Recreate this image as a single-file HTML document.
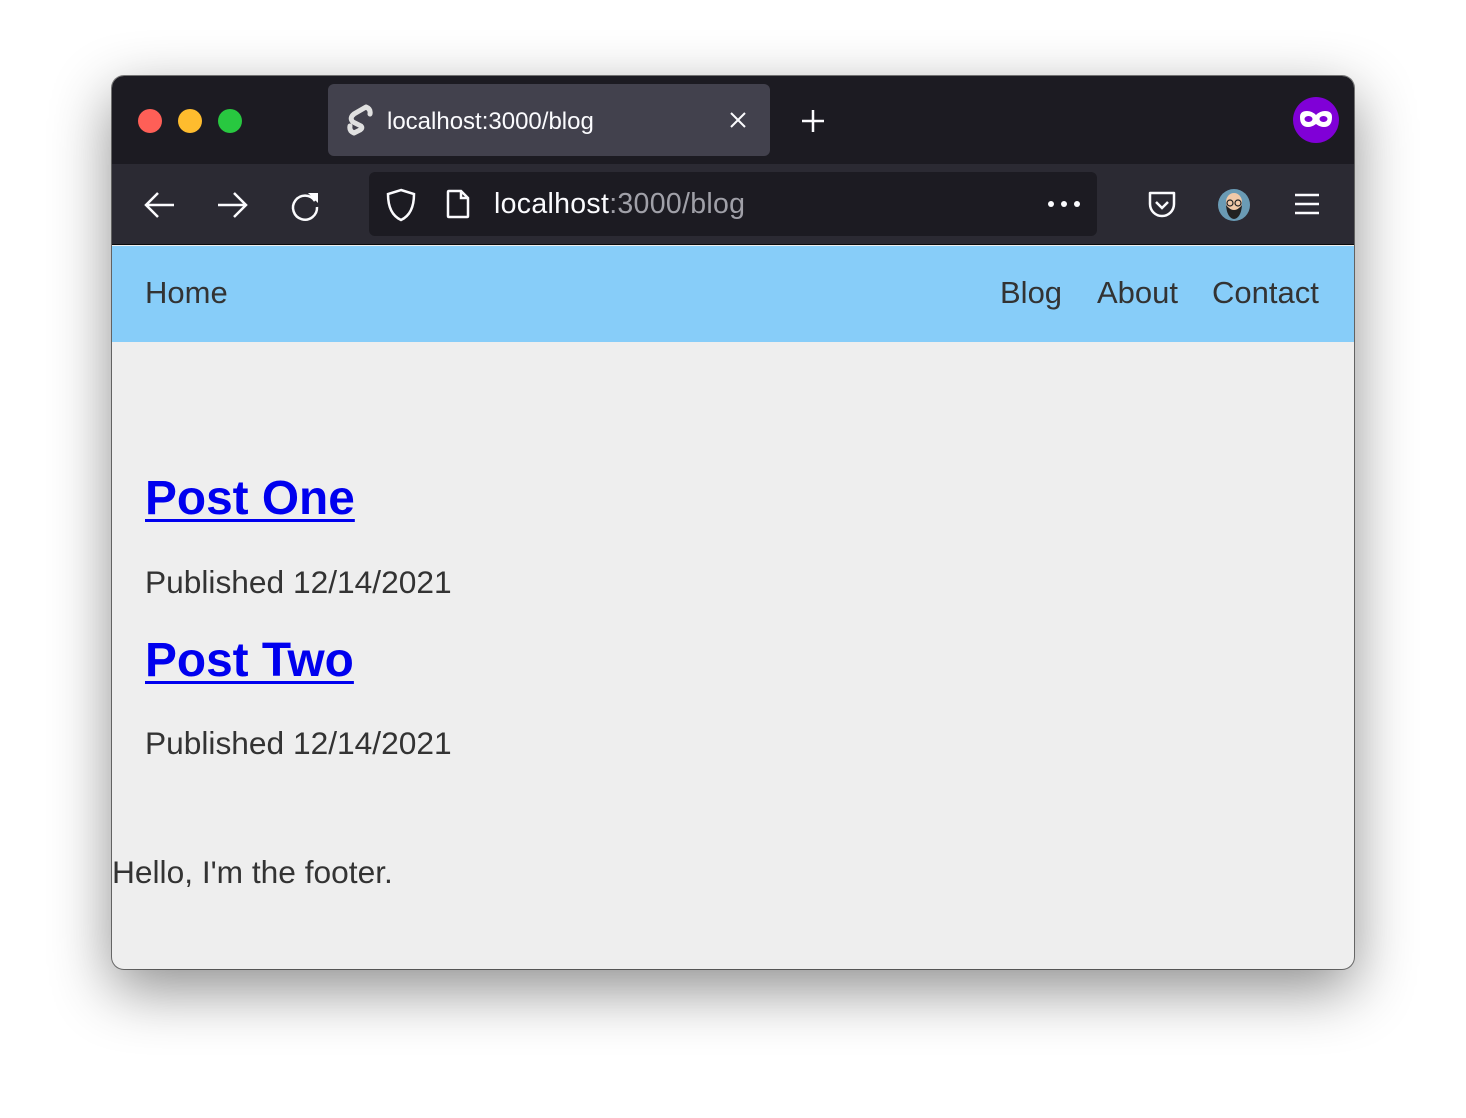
<!DOCTYPE html>
<html><head><meta charset="utf-8"><style>
*{margin:0;padding:0;box-sizing:border-box}
body{width:1466px;height:1118px;background:#fff;font-family:"Liberation Sans",Arial,sans-serif;position:relative;overflow:hidden}
.win{position:absolute;left:112px;top:76px;width:1242px;height:893px;border-radius:12px;overflow:hidden;background:#eeeeee;box-shadow:0 20px 60px rgba(0,0,0,.45),0 0 0 1px rgba(0,0,0,.5)}
.title{position:absolute;left:0;top:0;width:100%;height:88px;background:#1c1b22}
.dot{position:absolute;top:33px;width:24px;height:24px;border-radius:50%}
.tab{position:absolute;left:216px;top:8px;width:442px;height:72px;background:#42414d;border-radius:6px}
.tab span{position:absolute;left:59px;top:24px;color:#fbfbfe;font-size:24px}
.tool{position:absolute;left:0;top:88px;width:100%;height:81px;background:#2b2a33;border-bottom:1px solid #0c0c0d}
.url{position:absolute;left:257px;top:8px;width:728px;height:64px;background:#1c1b22;border-radius:6px}
.url span{position:absolute;left:125px;top:16px;font-size:28.5px;letter-spacing:0.3px;color:#fbfbfe}
.nav{position:absolute;left:0;top:170px;width:100%;height:96px;background:#87cdf9}
.nav a{position:absolute;top:29px;font-size:31px;color:#333;text-decoration:none}
h2{position:absolute;left:33px;font-size:47.8px;font-weight:bold}
h2 a{color:#0000ee;text-decoration:underline;text-decoration-thickness:3px;text-underline-offset:5px}
.p{position:absolute;left:33px;font-size:31.7px;color:#333}
svg{position:absolute}
</style></head><body>
<div class="win">
 <div class="title">
  <div class="dot" style="left:26px;background:#fe5f57"></div>
  <div class="dot" style="left:66px;background:#febc2e"></div>
  <div class="dot" style="left:106px;background:#28c840"></div>
  <div class="tab">
   <svg style="left:18px;top:20px" width="28" height="32" viewBox="0 0 28 32"><path d="M20 3 L8 10 Q3 14 7 18 L15 22 Q17 24 14 26 L8 29 M8 29 Q3 27 4 22 M20 3 Q25 5 24 10" fill="none" stroke="#e0e0e0" stroke-width="5" stroke-linecap="round"/></svg>
   <span>localhost:3000/blog</span>
   <svg style="left:402px;top:28px" width="16" height="16"><path d="M1 1L15 15M15 1L1 15" stroke="#fbfbfe" stroke-width="2"/></svg>
  </div>
  <svg style="left:689px;top:33px" width="24" height="24"><path d="M12 1V23M1 12H23" stroke="#fbfbfe" stroke-width="2.5"/></svg>
  <svg style="left:1181px;top:21px" width="46" height="46" viewBox="0 0 46 46"><circle cx="23" cy="23" r="23" fill="#8000d7"/><path d="M7 20Q7 14 14 14Q19 14 23 18Q27 14 32 14Q39 14 39 20Q39 30 31 30Q27 30 23 27Q19 30 15 30Q7 30 7 20Z" fill="#fff"/><ellipse cx="15.5" cy="22" rx="4" ry="3" fill="#8000d7"/><ellipse cx="30.5" cy="22" rx="4" ry="3" fill="#8000d7"/></svg>
 </div>
 <div class="tool">
  <svg style="left:32px;top:27px" width="32" height="28"><path d="M30 14H3M14 2L2 14L14 26" fill="none" stroke="#fbfbfe" stroke-width="2.5"/></svg>
  <svg style="left:104px;top:27px" width="32" height="28"><path d="M2 14H29M18 2L30 14L18 26" fill="none" stroke="#fbfbfe" stroke-width="2.5"/></svg>
  <svg style="left:176px;top:25px" width="34" height="34" viewBox="0 0 34 34"><path d="M27 12A12 12 0 1 0 29 18" fill="none" stroke="#fbfbfe" stroke-width="2.5"/><path d="M20 4L30 4L30 14Z" fill="#fbfbfe"/></svg>
  <div class="url">
   <svg style="left:17px;top:16px" width="30" height="34" viewBox="0 0 30 34"><path d="M15 2L28 6Q28 26 15 32Q2 26 2 6Z" fill="none" stroke="#fbfbfe" stroke-width="2.5"/></svg>
   <svg style="left:76px;top:17px" width="26" height="30" viewBox="0 0 26 30"><path d="M3 3Q3 2 4 2H16L23 9V27Q23 28 22 28H4Q3 28 3 27Z M16 2V9H23" fill="none" stroke="#fbfbfe" stroke-width="2.5"/></svg>
   <span>localhost<span style="position:static;color:#a0a0a8">:3000/blog</span></span>
   <svg style="left:678px;top:28px" width="34" height="8"><circle cx="4" cy="4" r="3" fill="#fbfbfe"/><circle cx="17" cy="4" r="3" fill="#fbfbfe"/><circle cx="30" cy="4" r="3" fill="#fbfbfe"/></svg>
  </div>
  <svg style="left:1035px;top:26px" width="30" height="30" viewBox="0 0 30 30"><path d="M3 3H27V14A12 12 0 0 1 3 14Z" fill="none" stroke="#fbfbfe" stroke-width="2.5" stroke-linejoin="round"/><path d="M9 12L15 18L21 12" fill="none" stroke="#fbfbfe" stroke-width="2.5"/></svg>
  <svg style="left:1105px;top:24px" width="34" height="34" viewBox="0 0 34 34"><circle cx="17" cy="17" r="16" fill="#6a9bb5"/><ellipse cx="17" cy="14" rx="8" ry="9" fill="#f1c9a8"/><path d="M9 17Q10 30 17 31Q24 30 25 17Q21 22 17 22Q13 22 9 17Z" fill="#222"/><circle cx="13" cy="15" r="3" fill="none" stroke="#222" stroke-width="1.2"/><circle cx="21" cy="15" r="3" fill="none" stroke="#222" stroke-width="1.2"/></svg>
  <svg style="left:1182px;top:29px" width="26" height="22"><path d="M1 2H25M1 11H25M1 20H25" stroke="#fbfbfe" stroke-width="2.5"/></svg>
 </div>
 <div class="nav">
  <a style="left:33px">Home</a>
  <a style="left:888px">Blog</a>
  <a style="left:985px">About</a>
  <a style="left:1100px">Contact</a>
 </div>
 <h2 style="top:395px"><a>Post One</a></h2>
 <div class="p" style="top:488px">Published 12/14/2021</div>
 <h2 style="top:557px"><a>Post Two</a></h2>
 <div class="p" style="top:649px">Published 12/14/2021</div>
 <div class="p" style="left:0;top:778px">Hello, I'm the footer.</div>
</div>
</body></html>
